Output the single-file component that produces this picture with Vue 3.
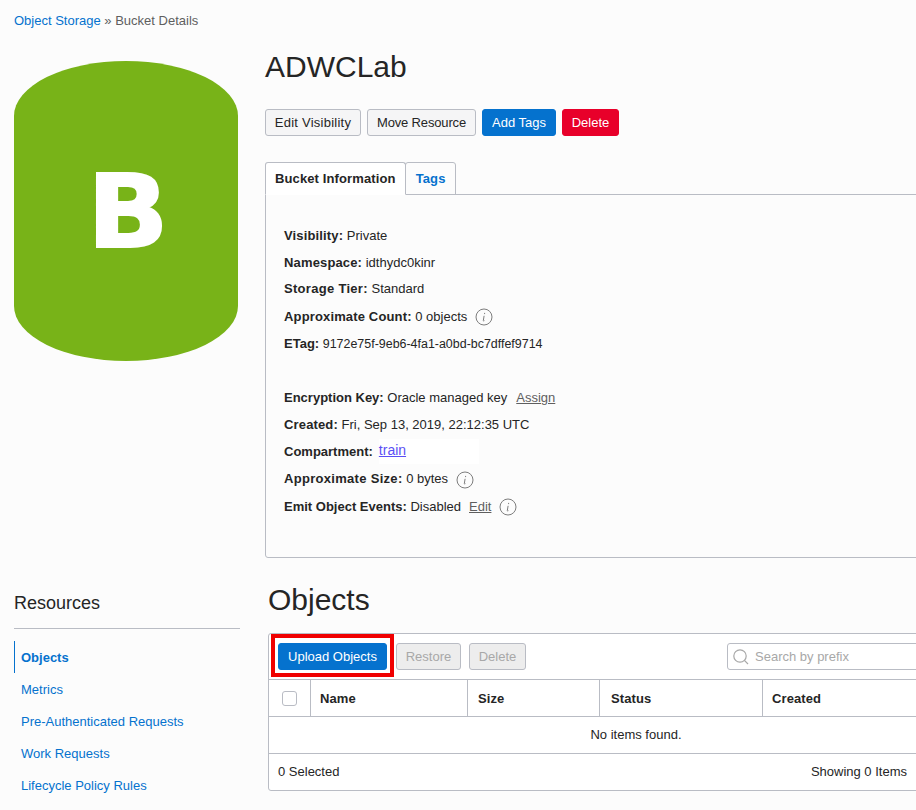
<template>
  <div class="page">
    <div class="crumbs"><a>Object Storage</a> » Bucket Details</div>

    <div class="top">
      <div class="bucket"><span>B</span></div>
      <div class="details">
        <h1>ADWCLab</h1>
        <div class="actions">
          <button class="bt edit">Edit Visibility</button>
          <button class="bt move">Move Resource</button>
          <button class="bt primary tags">Add Tags</button>
          <button class="bt danger del">Delete</button>
        </div>
        <div class="tabs">
          <div class="tab active">Bucket Information</div>
          <div class="tab">Tags</div>
          <div class="tab-line"></div>
        </div>
        <div class="panel">
          <div class="row" v-for="r in infoTop" :key="r.label">
            <b :class="r.cls">{{ r.label }}:</b>&nbsp;<span :class="{ etag: r.label === 'ETag' }">{{ r.value }}</span>
            <svg v-if="r.info" class="info" width="18" height="18" viewBox="0 0 18 18">
              <circle cx="9" cy="9" r="8" />
              <path d="M9.6 4.9v1.2M9.1 7.8 8.3 12.6c0 .5.5.6 1.1.1" />
            </svg>
          </div>
          <div class="row"></div>
          <div class="row"><b>Encryption Key:</b>&nbsp;Oracle managed key <a class="muted assign">Assign</a></div>
          <div class="row"><b class="sp1">Created:</b>&nbsp;Fri, Sep 13, 2019, 22:12:35 UTC</div>
          <div class="row"><b>Compartment:</b><span class="patch"><a class="train">train</a></span></div>
          <div class="row">
            <b class="sp2">Approximate Size:</b>&nbsp;0 bytes
            <svg class="info" width="18" height="18" viewBox="0 0 18 18">
              <circle cx="9" cy="9" r="8" />
              <path d="M9.6 4.9v1.2M9.1 7.8 8.3 12.6c0 .5.5.6 1.1.1" />
            </svg>
          </div>
          <div class="row">
            <b>Emit Object Events:</b>&nbsp;Disabled <a class="muted ml">Edit</a>
            <svg class="info" width="18" height="18" viewBox="0 0 18 18">
              <circle cx="9" cy="9" r="8" />
              <path d="M9.6 4.9v1.2M9.1 7.8 8.3 12.6c0 .5.5.6 1.1.1" />
            </svg>
          </div>
        </div>
      </div>
    </div>

    <div class="bottom">
      <aside class="resources">
        <h3>Resources</h3>
        <ul>
          <li v-for="(l, i) in links" :key="l" :class="{ current: i === 0 }">{{ l }}</li>
        </ul>
      </aside>

      <section class="objects">
        <h2>Objects</h2>
        <div class="table">
          <div class="toolbar">
            <span class="highlight"></span>
            <button class="bt primary upload">Upload Objects</button>
            <button class="bt off restore">Restore</button>
            <button class="bt off del">Delete</button>
            <div class="search">
              <svg width="16" height="16" viewBox="0 0 16 16">
                <circle cx="7" cy="7" r="6.2" />
                <path d="M11.4 11.4 15 15" />
              </svg>
              <span>Search by prefix</span>
            </div>
          </div>
          <div class="thead">
            <div class="th check"><span class="box"></span></div>
            <div class="th" v-for="c in columns" :key="c.name" :style="{ width: c.width + 'px', paddingLeft: c.pad + 'px' }">{{ c.name }}</div>
          </div>
          <div class="empty">No items found.</div>
          <div class="foot">
            <span>0 Selected</span>
            <span>Showing 0 Items</span>
          </div>
        </div>
      </section>
    </div>
  </div>
</template>

<script setup>
const infoTop = [
  { label: 'Visibility', value: 'Private', cls: 'sp1' },
  { label: 'Namespace', value: 'idthydc0kinr', cls: 'sp1' },
  { label: 'Storage Tier', value: 'Standard', cls: 'sp2' },
  { label: 'Approximate Count', value: '0 objects', info: true, cls: 'sp1' },
  { label: 'ETag', value: '9172e75f-9eb6-4fa1-a0bd-bc7dffef9714' }
]

const links = ['Objects', 'Metrics', 'Pre-Authenticated Requests', 'Work Requests', 'Lifecycle Policy Rules']

const columns = [
  { name: 'Name', width: 157, pad: 9 },
  { name: 'Size', width: 132, pad: 10 },
  { name: 'Status', width: 163, pad: 11 },
  { name: 'Created', width: 160, pad: 9 }
]
</script>

<style>
html, body {
  margin: 0;
  background: #fcfcfc;
}
</style>

<style scoped>
.page {
  width: 916px;
  height: 810px;
  overflow: hidden;
  padding-left: 14px;
  box-sizing: border-box;
  background: #fcfcfc;
  font-family: "Liberation Sans", Arial, sans-serif;
  font-size: 13px;
  color: #252525;
}
a { color: #0572ce; }
.crumbs {
  height: 43px;
  line-height: 42px;
  color: #5f5f5f;
}
.top { display: flex; height: 539px; }
.bucket {
  flex: none;
  width: 224px;
  height: 300px;
  margin-top: 18px;
  border-radius: 112px / 55px;
  background: #78b318;
  color: #fff;
  display: flex;
  align-items: center;
  justify-content: center;
  font-family: "DejaVu Sans", sans-serif;
  font-size: 102px;
  font-weight: bold;
  -webkit-text-stroke: 2px #fff;
}
.bucket span {
  display: inline-block;
  margin-left: 3px;
  transform: scaleX(1.045);
}
.details { flex: none; width: 700px; margin-left: 27px; }
h1 {
  margin: 0;
  height: 66px;
  line-height: 47px;
  font-size: 30px;
  font-weight: normal;
  color: #252525;
}
.actions { display: flex; gap: 6px; height: 53px; align-items: flex-start; }
.bt {
  height: 27px;
  padding: 0;
  border: 1px solid #b9bcc4;
  border-radius: 3px;
  background: #f5f5f6;
  color: #252525;
  font: 13px "Liberation Sans", Arial, sans-serif;
  white-space: nowrap;
}
.edit { width: 96px; letter-spacing: .25px; }
.move { width: 109px; letter-spacing: -.15px; }
.tags { width: 74px; }
.del { width: 57px; }
.restore { width: 65px; }
.bt.primary { background: #0572ce; border-color: #0572ce; color: #fff; }
.bt.danger { background: #e8002a; border-color: #e8002a; color: #fff; }
.bt.off { background: #ededed; color: #a8a8a8; }
.tabs { display: flex; height: 33px; align-items: flex-end; }
.tab {
  height: 33px;
  line-height: 31px;
  padding: 0 9px;
  box-sizing: border-box;
  border: 1px solid #b9bcc4;
  border-radius: 3px 3px 0 0;
  font-weight: bold;
  letter-spacing: .12px;
  color: #0572ce;
  margin-right: -1px;
}
.tab.active {
  color: #252525;
  background: #fff;
  border-bottom-color: #fff;
  position: relative;
  z-index: 1;
}
.tab:not(.active) { padding: 0 10px; }
.tab-line { flex: 1; border-bottom: 1px solid #b9bcc4; margin-left: 1px; }
.panel {
  height: 364px;
  box-sizing: border-box;
  margin-top: -1px;
  padding: 27px 18px 0;
  border: 1px solid #b9bcc4;
  border-radius: 0 0 0 3px;
}
.row {
  height: 27.16px;
  line-height: 27px;
  display: flex;
  align-items: center;
}
/* the first rows sit a bit tighter than the rest */
.row:nth-child(1) { height: 27px; }
.row:nth-child(2) { height: 26.3px; }
.sp1 { letter-spacing: .15px; }
.sp2 { letter-spacing: .3px; }
.etag { font-size: 12.45px; position: relative; top: 1px; }
.ml { margin-left: 8px; }
.assign { margin-left: 9px; }
.muted { color: #5f5f5f; text-decoration: underline; }
.patch {
  display: block;
  width: 100px;
  margin-left: 6px;
  background: #fff;
  line-height: 24px;
}
.train {
  color: #5b4ff5;
  font-size: 14px;
  text-decoration: underline;
  position: relative;
  top: -1px;
}
.info { margin-left: 8px; fill: none; position: relative; top: 1px; }
.info circle { stroke: #7d7d7d; stroke-width: 1; }
.info path { stroke: #7d7d7d; stroke-width: 1; fill: none; }
.bottom { display: flex; }
.resources { flex: none; width: 226px; }
.resources h3 {
  margin: 0;
  height: 46px;
  line-height: 42px;
  font-size: 18px;
  font-weight: normal;
  border-bottom: 1px solid #b9bcc4;
  color: #252525;
}
.resources ul { list-style: none; margin: 12px 0 0; padding: 0; }
.resources li {
  height: 32px;
  line-height: 34px;
  padding-left: 7px;
  color: #0572ce;
}
.resources li.current {
  font-weight: bold;
  padding-left: 6px;
  border-left: 1px solid #0572ce;
}
.objects { flex: none; width: 800px; margin-left: 28px; }
.objects h2 {
  margin: 0;
  height: 51px;
  line-height: 36px;
  font-size: 30px;
  font-weight: normal;
  color: #252525;
}
.table {
  width: 736px;
  height: 158px;
  box-sizing: border-box;
  border: 1px solid #b9bcc4;
  border-radius: 3px;
  background: #fff;
}
.toolbar {
  position: relative;
  height: 46px;
  box-sizing: border-box;
  padding: 9px 0 0 9px;
  display: flex;
  gap: 8px;
  border-bottom: 1px solid #b9bcc4;
}
.highlight {
  position: absolute;
  left: 2px;
  top: 0;
  width: 123px;
  height: 43px;
  box-sizing: border-box;
  border: 4px solid #f00000;
}
.upload { width: 109px; position: relative; margin-right: 1px; }
.search {
  margin-left: 193px;
  width: 240px;
  height: 27px;
  box-sizing: border-box;
  border: 1px solid #b9bcc4;
  border-radius: 3px;
  background: #fff;
  display: flex;
  align-items: center;
  gap: 6px;
  padding-left: 5px;
  color: #a8a8a8;
}
.search svg { fill: none; stroke: #a8a8a8; stroke-width: 1.2; }
.thead { display: flex; height: 37px; box-sizing: border-box; border-bottom: 1px solid #b9bcc4; }
.th {
  box-sizing: border-box;
  border-right: 1px solid #b9bcc4;
  padding-left: 9px;
  line-height: 38px;
  font-weight: bold;
  letter-spacing: .1px;
}
.th:last-child { border-right: 0; }
.check { width: 42px; padding: 0; display: flex; align-items: center; justify-content: center; }
.box {
  box-sizing: border-box;
  width: 15px;
  height: 15px;
  border: 1px solid #b9bcc4;
  border-radius: 3px;
  background: #fff;
}
.empty {
  height: 37px;
  box-sizing: border-box;
  line-height: 36px;
  text-align: center;
  border-bottom: 1px solid #b9bcc4;
}
.foot {
  height: 36px;
  line-height: 36px;
  padding: 0 9px;
  display: flex;
  justify-content: space-between;
  width: 629px;
}
</style>
